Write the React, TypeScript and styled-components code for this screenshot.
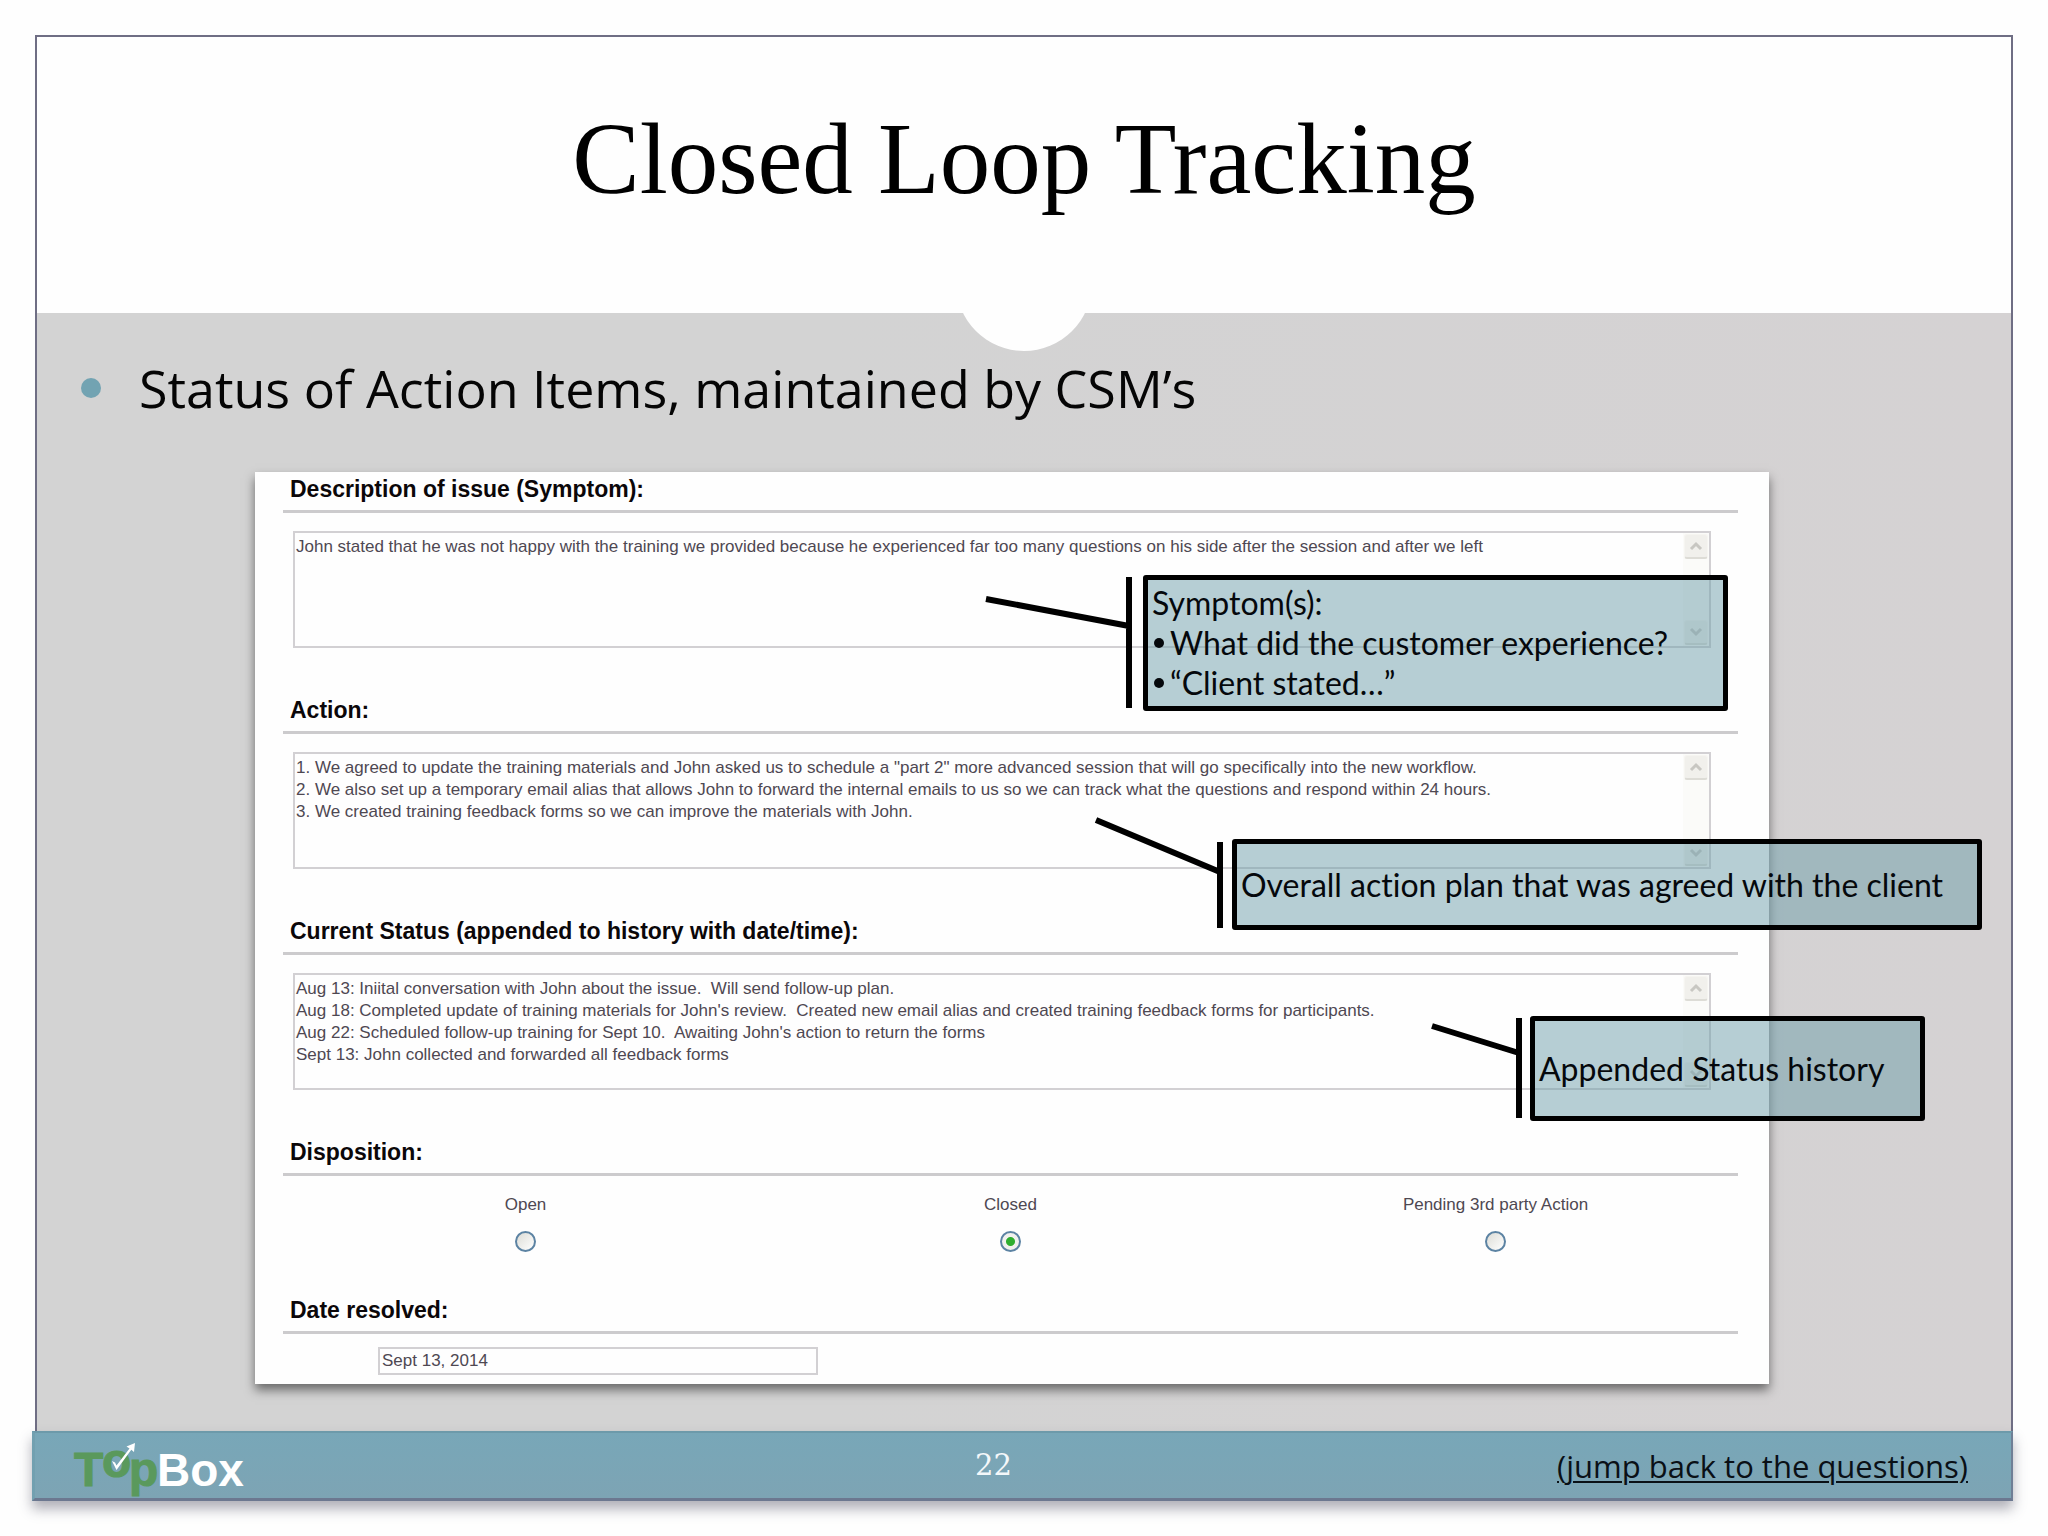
import React from "react";
import styled, { createGlobalStyle } from "styled-components";

const serif = `Georgia, "Liberation Serif", serif`;
const humanist = `Candara, "Open Sans", sans-serif`;
const callout = `"Gill Sans", Lato, sans-serif`;
const form = `Arial, "Liberation Sans", sans-serif`;

const GlobalStyle = createGlobalStyle`
  *, *::before, *::after { box-sizing: border-box; }
  body { margin: 0; background: #fefefe; }
`;

const Slide = styled.main`
  margin: 35px;
  border: 2px solid #6f6e84;
  border-bottom: 0;
  background: linear-gradient(90deg, #d3d3d3 40%, #d5d2d3);
`;

const Header = styled.header`
  position: relative;
  height: 276px;
  padding-top: 64px;
  background: #fefefe;
  text-align: center;
`;

const Notch = styled.span`
  position: absolute;
  left: calc(50% - 68px);
  bottom: -38px;
  width: 136px;
  height: 136px;
  border-radius: 50%;
  background: #fefefe;
`;

const Title = styled.h1`
  position: relative;
  margin: 0;
  font: 400 101px/116px ${serif};
  color: #000;
`;

const Points = styled.ul`
  margin: 0;
  padding: 41px 44px 51px;
  list-style: none;
`;

const Point = styled.li`
  display: flex;
  align-items: center;
  gap: 38px;
  font: 400 52px/67px ${humanist};
  color: #050505;

  &::before {
    content: "";
    width: 20px;
    height: 20px;
    border-radius: 50%;
    background: #72a3b2;
  }
`;

const Card = styled.form`
  position: relative;
  margin: 0 242px 47px 218px;
  padding: 0 31px 9px 28px;
  background: #fefefe;
  box-shadow: 0 6px 10px rgba(0, 0, 0, 0.5);
`;

const Section = styled.section`
  font: 400 17px/22px ${form};
  color: #4e4852;
`;

const Heading = styled.h2`
  margin: 0;
  padding: 0 7px 4px;
  border-bottom: 3px solid #cccbcd;
  font: 700 23px/34px ${form};
  color: #0b0709;
`;

const Group = styled.fieldset`
  margin: 0;
  padding: 0;
  border: 0;
`;

const Field = styled.div`
  display: flex;
  margin: 18px 27px 45px 10px;
  height: 117px;
  border: 2px solid #d2d0d3;
`;

const Memo = styled.textarea`
  flex: 1;
  border: 0;
  padding: 3px 1px;
  resize: none;
  overflow: hidden;
  outline: 0;
  background: transparent;
  font: inherit;
  color: inherit;
  white-space: pre;
`;

const ScrollBar = styled.div`
  display: flex;
  flex-direction: column;
  justify-content: space-between;
  width: 26px;
  padding: 1px;
  background: #fbfbf9;
`;

const ScrollButton = styled.button`
  display: grid;
  place-items: center;
  height: 25px;
  padding: 0;
  border: 1px solid #f6f5f1;
  border-bottom: 2px solid #dddcd6;
  border-radius: 3px;
  background: #f1f0ec;
  color: #c8c7c2;
`;

const Options = styled.div`
  display: grid;
  grid-template-columns: repeat(3, 1fr);
  height: 117px;
  padding-top: 18px;
`;

const Option = styled.label`
  display: flex;
  flex-direction: column;
  align-items: center;
  gap: 15px;
`;

const Radio = styled.input`
  appearance: none;
  margin: 0;
  width: 21px;
  height: 21px;
  border: 2px solid #5c83a3;
  border-radius: 50%;
  background: linear-gradient(135deg, #dcdcd6, #fff);

  &:checked {
    background: radial-gradient(circle, #2fae2f 0 4px, transparent 5px), #f1f1ee;
  }
`;

const DateInput = styled.input`
  display: block;
  width: 440px;
  height: 28px;
  margin: 13px 0 0 95px;
  padding: 0 2px;
  border: 2px solid #d2d0d3;
  outline: 0;
  background: transparent;
  font: inherit;
  color: inherit;
`;

const Note = styled.aside<{ $left: number; $top: number; $width: number; $height: number }>`
  position: absolute;
  left: ${(p) => p.$left}px;
  top: ${(p) => p.$top}px;
  display: flex;
  flex-direction: column;
  justify-content: center;
  width: ${(p) => p.$width}px;
  height: ${(p) => p.$height}px;
  padding: 0 4px;
  border: 5px solid #000;
  border-radius: 3px;
  background: rgba(109, 157, 169, 0.5);
  background-clip: padding-box;
  font: 400 32px/40px ${callout};
  font-variant-ligatures: none;
  color: #05080c;
  white-space: nowrap;
`;

const NoteText = styled.p`
  margin: 0;
`;

const NoteList = styled.ul`
  margin: 0;
  padding: 0;
  list-style: none;
`;

const NoteItem = styled.li`
  display: flex;
  align-items: center;
  gap: 6px;
  padding-left: 2px;

  &::before {
    content: "";
    width: 10px;
    height: 10px;
    border-radius: 50%;
    background: currentColor;
  }
`;

const Pointers = styled.svg`
  position: absolute;
  left: 0;
  top: 0;
  overflow: visible;
  pointer-events: none;
`;

const Footer = styled.footer`
  display: grid;
  grid-template-columns: 17fr auto 18fr;
  align-items: center;
  height: 70px;
  margin: 0 -2px 0 -5px;
  padding: 0 43px 0 37px;
  border: solid;
  border-width: 2px 2px 3px 3px;
  border-color: #6d9aaa #6f7f96 #6c7890 #72a0b0;
  background: linear-gradient(#78a7b8, #7da4b4);
  box-shadow: 0 8px 12px rgba(60, 60, 80, 0.4);
`;

const Logo = styled.svg`
  display: block;
`;

const PageNumber = styled.span`
  padding-bottom: 2px;
  font: 400 29px/32px "DejaVu Serif", serif;
  color: #f4f8fa;
`;

const JumpLink = styled.a`
  justify-self: end;
  font: 400 31px/40px ${humanist};
  color: #0a1016;
  text-decoration: underline;
  text-decoration-thickness: 2px;
  text-underline-offset: 3px;
`;

const memos = [
  {
    id: "symptom",
    title: "Description of issue (Symptom):",
    text: "John stated that he was not happy with the training we provided because he experienced far too many questions on his side after the session and after we left",
  },
  {
    id: "action",
    title: "Action:",
    text: `1. We agreed to update the training materials and John asked us to schedule a "part 2" more advanced session that will go specifically into the new workflow.
2. We also set up a temporary email alias that allows John to forward the internal emails to us so we can track what the questions and respond within 24 hours.
3. We created training feedback forms so we can improve the materials with John.`,
  },
  {
    id: "status",
    title: "Current Status (appended to history with date/time):",
    text: `Aug 13: Iniital conversation with John about the issue.  Will send follow-up plan.
Aug 18: Completed update of training materials for John's review.  Created new email alias and created training feedback forms for participants.
Aug 22: Scheduled follow-up training for Sept 10.  Awaiting John's action to return the forms
Sept 13: John collected and forwarded all feedback forms`,
  },
];

const dispositions = ["Open", "Closed", "Pending 3rd party Action"];

function Chevron({ down = false }: { down?: boolean }) {
  return (
    <svg width="14" height="10" viewBox="0 0 14 10" fill="none" stroke="currentColor" strokeWidth="3" aria-hidden="true">
      <path d={down ? "M2 2l5 5 5-5" : "M2 8l5-5 5 5"} />
    </svg>
  );
}

function TopBoxLogo() {
  return (
    <Logo width="180" height="65" viewBox="0 0 180 65" role="img" aria-label="TopBox" fontFamily="Liberation Sans, Arial, sans-serif" fontWeight="700" fontSize="48">
      <g fill="#5a995c" stroke="#5a995c">
        <text x="2" y="53">T</text>
        <text x="30" y="44">o</text>
        <text x="57" y="53">p</text>
      </g>
      <text x="85" y="53" fill="#fff" fontSize="46">Box</text>
      <path d="M40 28l3 1.500 1.500 3L57.500 15.500l-3-2L63 10l-1 9-2.700-2.200L44.500 37z" fill="#fff" />
    </Logo>
  );
}

export default function App() {
  return (
    <>
      <GlobalStyle />
      <Slide>
        <Header>
          <Notch />
          <Title>Closed Loop Tracking</Title>
        </Header>
        <Points>
          <Point>Status of Action Items, maintained by CSM’s</Point>
        </Points>
        <Card>
          {memos.map((m) => (
            <Section key={m.id}>
              <Heading>
                <label htmlFor={m.id}>{m.title}</label>
              </Heading>
              <Field>
                <Memo id={m.id} defaultValue={m.text} spellCheck={false} wrap="off" />
                <ScrollBar>
                  <ScrollButton type="button" aria-label="Scroll up">
                    <Chevron />
                  </ScrollButton>
                  <ScrollButton type="button" aria-label="Scroll down">
                    <Chevron down />
                  </ScrollButton>
                </ScrollBar>
              </Field>
            </Section>
          ))}
          <Section>
            <Group aria-labelledby="disposition">
              <Heading id="disposition">Disposition:</Heading>
              <Options>
                {dispositions.map((d) => (
                  <Option key={d}>
                    {d}
                    <Radio type="radio" name="disposition" defaultChecked={d === "Closed"} />
                  </Option>
                ))}
              </Options>
            </Group>
          </Section>
          <Section>
            <Heading>
              <label htmlFor="resolved">Date resolved:</label>
            </Heading>
            <DateInput id="resolved" defaultValue="Sept 13, 2014" />
          </Section>

          <Pointers width="1" height="1" stroke="#000" strokeWidth="6" fill="none" aria-hidden="true">
            <path d="M731 127L874 154M874 105V236" />
            <path d="M841 348L965 400M965 370V456" />
            <path d="M1177 554L1264 581M1264 546V646" />
          </Pointers>
          <Note $left={888} $top={103} $width={585} $height={136}>
            <NoteText>Symptom(s):</NoteText>
            <NoteList>
              <NoteItem>What did the customer experience?</NoteItem>
              <NoteItem>“Client stated…”</NoteItem>
            </NoteList>
          </Note>
          <Note $left={977} $top={367} $width={750} $height={91}>
            <NoteText>Overall action plan that was agreed with the client</NoteText>
          </Note>
          <Note $left={1275} $top={544} $width={395} $height={105}>
            <NoteText>Appended Status history</NoteText>
          </Note>
        </Card>
        <Footer>
          <TopBoxLogo />
          <PageNumber>22</PageNumber>
          <JumpLink href="#questions">(jump back to the questions)</JumpLink>
        </Footer>
      </Slide>
    </>
  );
}
